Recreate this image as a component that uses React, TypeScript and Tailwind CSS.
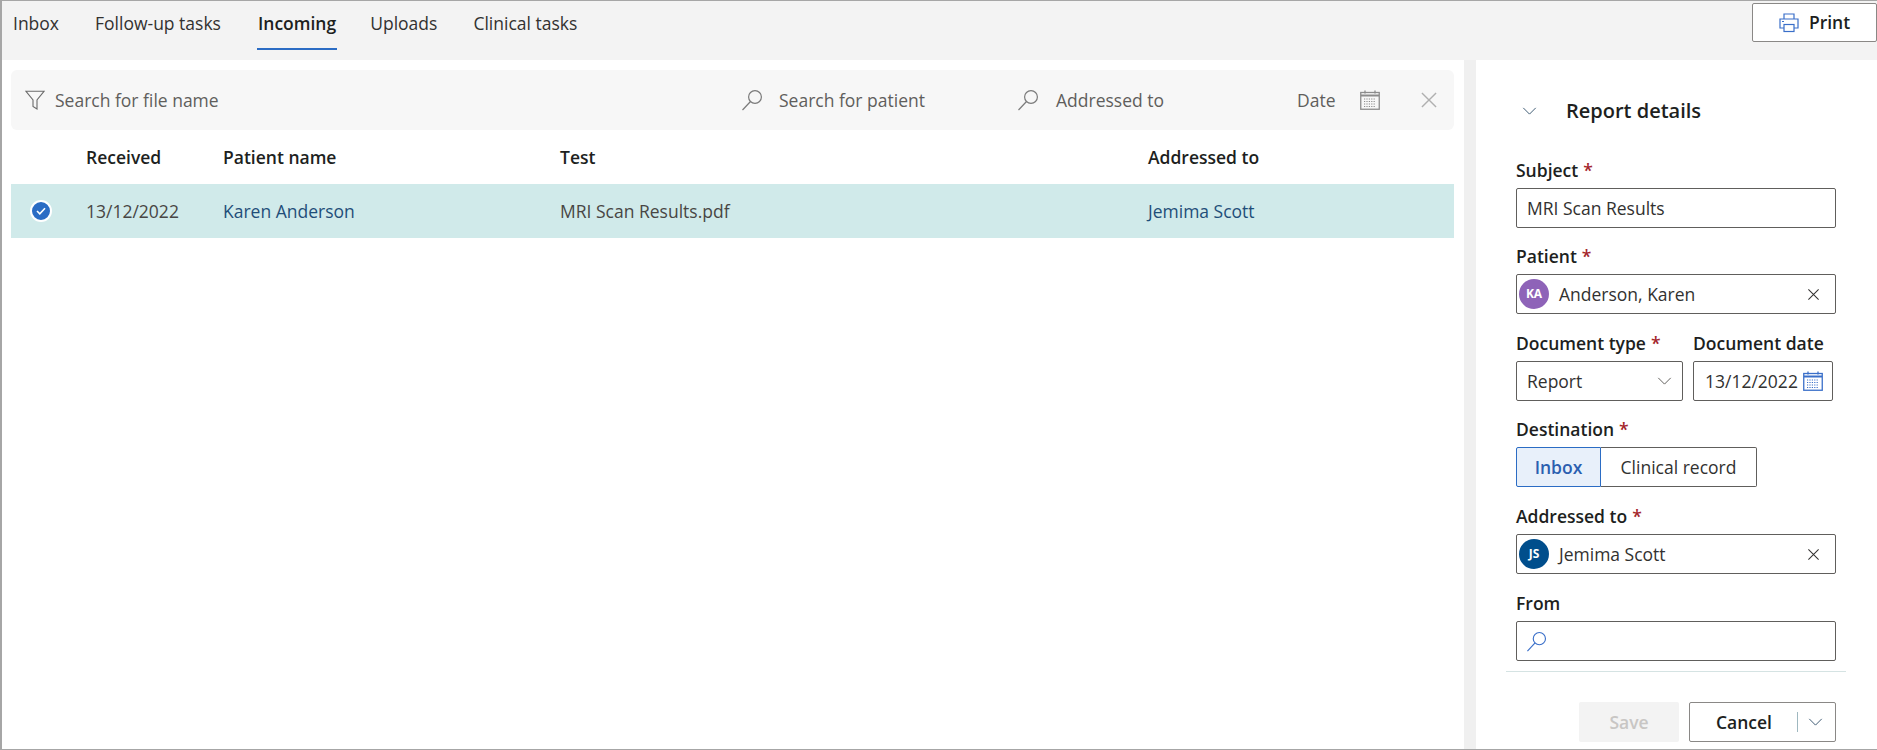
const font = { fontFamily: '"Open Sans", sans-serif' };

const SearchIcon = ({ className }: { className: string }) => (
  <svg viewBox="0 0 22 22" fill="none" stroke="currentColor" strokeWidth="1.2" className={className}>
    <circle cx="14" cy="8" r="6.4" />
    <path d="M9.5 12.5 1.5 21" />
  </svg>
);

const CloseIcon = ({ className }: { className: string }) => (
  <svg viewBox="0 0 14 14" fill="none" stroke="currentColor" strokeWidth="1.1" className={className}>
    <path d="M1.5 1.5l11 11M12.5 1.5l-11 11" />
  </svg>
);

const Chevron = ({ className }: { className: string }) => (
  <svg viewBox="0 0 16 9" fill="none" stroke="currentColor" strokeWidth="1.1" className={className}>
    <path d="M1 1l7 7 7-7" />
  </svg>
);

const CalendarIcon = ({ className }: { className: string }) => (
  <svg viewBox="0 0 20 20" fill="none" stroke="currentColor" className={className}>
    <rect x="0.75" y="2.5" width="18.5" height="16.75" strokeWidth="1.3" />
    <path d="M1 5.5h18" strokeWidth="2" />
    <path d="M5 0.5v3M15 0.5v3" strokeWidth="1.3" />
    <path d="M4 9h12M4 11.5h12M4 14h12M4 16.5h12" strokeWidth="1" strokeDasharray="1.2 1.2" />
  </svg>
);

const Required = () => <span className="text-[#a4262c] ml-[5px]">*</span>;

const Label = ({ text, required }: { text: string; required?: boolean }) => (
  <div className="h-[22px] leading-[20px] text-[17.5px] font-[550] text-[#201f1e] mb-[6px] whitespace-nowrap">
    {text}
    {required && <Required />}
  </div>
);

const PersonField = ({ initials, name, color }: { initials: string; name: string; color: string }) => (
  <div className="h-[40px] border border-[#605e5c] rounded-[2px] flex items-center pl-[2px] pr-[15px] text-[#323130]">
    <div className={`w-[30px] h-[30px] rounded-full text-white flex items-center justify-center text-[12px] font-bold ${color}`}>
      {initials}
    </div>
    <span className="ml-[10px] flex-1 text-[17.5px]">{name}</span>
    <CloseIcon className="w-[13px] h-[13px] text-[#323130]" />
  </div>
);

export default function App() {
  const tabs = ['Inbox', 'Follow-up tasks', 'Incoming', 'Uploads', 'Clinical tasks'];

  return (
    <div style={font} className="w-[1877px] h-[750px] border border-l-2 border-[#a6a6a6] border-r-0 flex flex-col bg-white overflow-hidden">
      {/* Tabs */}
      <div className="h-[59px] bg-[#f3f3f3] flex items-start justify-between shrink-0">
        <div className="flex pl-[11px] gap-[36px] text-[17.5px] text-[#323130]">
          {tabs.map((tab) => (
            <div
              key={tab}
              className={
                tab === 'Incoming'
                  ? 'h-[49px] pt-[9px] leading-[26px] border-b-2 border-[#2b6cc4] font-semibold text-[#201f1e] px-[1px] -mr-[3px]'
                  : 'h-[49px] pt-[9px] leading-[26px]'
              }
            >
              {tab}
            </div>
          ))}
        </div>
        <div className="mt-[2px] w-[125px] h-[39px] bg-white border border-[#8a8886] rounded-[2px] flex items-center justify-center gap-[10px] text-[#201f1e] font-[550] text-[17.5px]">
          <svg viewBox="0 0 20 20" fill="none" stroke="#3a6fc9" strokeWidth="1.2" className="w-[20px] h-[20px]">
            <path d="M5 6V1h10v5" />
            <path d="M5 15H1V6h18v9h-4" />
            <rect x="5" y="11.5" width="10" height="7" />
            <path d="M3 8.5h2" />
          </svg>
          Print
        </div>
      </div>

      <div className="flex flex-1 min-h-0">
        {/* Incoming list */}
        <div className="w-[1462px] pt-[10px] pl-[9px] pr-[10px] shrink-0">
          <div className="h-[60px] bg-[#f7f7f7] rounded-[6px] flex items-center text-[17.5px] text-[#605e5c]">
            <svg viewBox="0 0 20 20" fill="none" stroke="#6b6b6b" strokeWidth="1.1" className="ml-[14px] w-[20px] h-[20px]">
              <path d="M0.8 1.2h18.4L12 10v9l-4-2.5V10z" />
            </svg>
            <span className="ml-[10px] w-[686px]">Search for file name</span>
            <SearchIcon className="w-[22px] h-[22px] text-[#7a7a7a]" />
            <span className="ml-[16px] w-[238px]">Search for patient</span>
            <SearchIcon className="w-[22px] h-[22px] text-[#7a7a7a]" />
            <span className="ml-[17px] w-[241px]">Addressed to</span>
            <span>Date</span>
            <CalendarIcon className="ml-[24px] w-[20px] h-[22px] text-[#8c8c8c]" />
            <CloseIcon className="ml-[40px] w-[18px] h-[18px] text-[#b0b0b0]" />
          </div>

          <div className="h-[54px] flex items-center text-[17.5px] font-[550] text-[#201f1e]">
            <span className="ml-[75px] w-[137px]">Received</span>
            <span className="w-[337px]">Patient name</span>
            <span className="w-[588px]">Test</span>
            <span>Addressed to</span>
          </div>

          <div className="h-[54px] bg-[#d0eaea] flex items-center text-[17.5px] text-[#484644]">
            <div className="ml-[19px] w-[22px] h-[22px] rounded-full bg-[#2b6cc4] border-2 border-white flex items-center justify-center">
              <svg viewBox="0 0 12 10" fill="none" stroke="white" strokeWidth="2" className="w-[10px] h-[8px]">
                <path d="M1 5l3.5 3.5L11 1.5" />
              </svg>
            </div>
            <span className="ml-[34px] w-[137px]">13/12/2022</span>
            <span className="w-[337px] text-[#1f4e79]">Karen Anderson</span>
            <span className="w-[588px]">MRI Scan Results.pdf</span>
            <span className="text-[#1f4e79]">Jemima Scott</span>
          </div>
        </div>

        {/* Splitter */}
        <div className="w-[12px] bg-[#f0f0f0] shrink-0" />

        {/* Report details */}
        <div className="flex-1 pt-[37px] flex flex-col">
          <div className="flex items-center h-[28px] pl-[46px]">
            <Chevron className="w-[15px] h-[8px] text-[#3d5a73]" />
            <span className="ml-[29px] text-[20px] font-[550] text-[#201f1e]">Report details</span>
          </div>

          <div className="pl-[40px] pr-[41px] mt-[35px]">
            <Label text="Subject" required />
            <div className="h-[40px] border border-[#605e5c] rounded-[2px] flex items-center pl-[10px] text-[17.5px] text-[#323130]">
              MRI Scan Results
            </div>

            <div className="mt-[18px]">
              <Label text="Patient" required />
              <PersonField initials="KA" name="Anderson, Karen" color="bg-[#8e63b8]" />
            </div>

            <div className="mt-[19px] flex gap-[10px]">
              <div className="w-[167px]">
                <Label text="Document type" required />
                <div className="h-[40px] border border-[#605e5c] rounded-[2px] flex items-center justify-between pl-[10px] pr-[10px] text-[17.5px] text-[#323130]">
                  Report
                  <Chevron className="w-[15px] h-[8px] text-[#605e5c]" />
                </div>
              </div>
              <div className="w-[140px]">
                <Label text="Document date" />
                <div className="h-[40px] border border-[#605e5c] rounded-[2px] flex items-center justify-between pl-[11px] pr-[9px] text-[17.5px] text-[#323130]">
                  13/12/2022
                  <CalendarIcon className="w-[20px] h-[20px] text-[#3a6fc9]" />
                </div>
              </div>
            </div>

            <div className="mt-[18px]">
              <Label text="Destination" required />
              <div className="w-[241px] h-[40px] flex text-[17.5px]">
                <div className="w-[85px] bg-[#e8f0fa] border border-[#2b6cc4] rounded-l-[2px] flex items-center justify-center font-semibold text-[#2b5fb0]">
                  Inbox
                </div>
                <div className="flex-1 border border-l-0 border-[#605e5c] rounded-r-[2px] flex items-center justify-center text-[#323130]">
                  Clinical record
                </div>
              </div>
            </div>

            <div className="mt-[19px]">
              <Label text="Addressed to" required />
              <PersonField initials="JS" name="Jemima Scott" color="bg-[#004e8c]" />
            </div>

            <div className="mt-[19px]">
              <Label text="From" />
              <div className="h-[40px] border border-[#605e5c] rounded-[2px] flex items-center pl-[9px]">
                <SearchIcon className="w-[21px] h-[21px] text-[#3a6fc9]" />
              </div>
            </div>
          </div>

          <div className="ml-[30px] mr-[31px] mt-[10px] border-t border-[#d5e3e3]" />

          <div className="pr-[41px] mt-[30px] flex justify-end gap-[10px] text-[17.5px]">
            <div className="w-[100px] h-[40px] bg-[#f3f3f3] rounded-[2px] flex items-center justify-center font-semibold text-[#c8c6c4]">
              Save
            </div>
            <div className="w-[147px] h-[40px] border border-[#8a8886] rounded-[2px] flex items-center font-[550] text-[#201f1e]">
              <span className="w-[107px] text-center pl-[1px]">Cancel</span>
              <span className="h-[20px] border-l border-[#9fb8c0]" />
              <Chevron className="ml-[10px] w-[15px] h-[8px] text-[#3d5a73]" />
            </div>
          </div>
        </div>
      </div>
    </div>
  );
}
